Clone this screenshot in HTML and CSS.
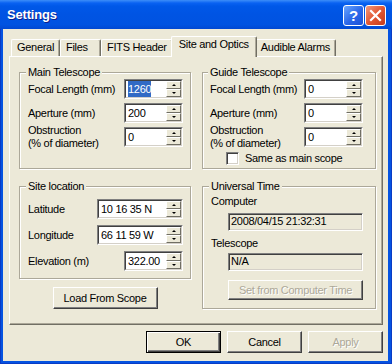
FILE: index.html
```html
<html>
<head>
<link rel="stylesheet" href="styles.css">
</head>
<body>
<div class="window">
  <div class="titlebar">
    <span class="title">Settings</span>
    <div class="caption-buttons">
      <span class="cap-btn help">?</span>
      <span class="cap-btn close">
        <svg width="13" height="13" viewBox="0 0 13 13"><path d="M2 2 L11 11 M11 2 L2 11" stroke="#fff" stroke-width="2.2" stroke-linecap="square"/></svg>
      </span>
    </div>
  </div>

  <div class="client">
    <div class="tabs">
      <span class="tab">General</span>
      <span class="tab">Files</span>
      <span class="tab">FITS Header</span>
      <span class="tab active">Site and Optics</span>
      <span class="tab">Audible Alarms</span>
    </div>

    <div class="panel">
      <fieldset class="group main-scope">
        <legend>Main Telescope</legend>
        <div class="field">
          <label>Focal Length (mm)</label>
          <div class="spin"><div class="spin-in"><span class="edit"><span class="sel">1260</span></span><span class="spin-btns"><i class="up"></i><i class="down"></i></span></div></div>
        </div>
        <div class="field">
          <label>Aperture (mm)</label>
          <div class="spin"><div class="spin-in"><span class="edit">200</span><span class="spin-btns"><i class="up"></i><i class="down"></i></span></div></div>
        </div>
        <div class="field">
          <label>Obstruction<br>(% of diameter)</label>
          <div class="spin"><div class="spin-in"><span class="edit">0</span><span class="spin-btns"><i class="up"></i><i class="down"></i></span></div></div>
        </div>
      </fieldset>

      <fieldset class="group guide-scope">
        <legend>Guide Telescope</legend>
        <div class="field">
          <label>Focal Length (mm)</label>
          <div class="spin"><div class="spin-in"><span class="edit">0</span><span class="spin-btns"><i class="up"></i><i class="down"></i></span></div></div>
        </div>
        <div class="field">
          <label>Aperture (mm)</label>
          <div class="spin"><div class="spin-in"><span class="edit">0</span><span class="spin-btns"><i class="up"></i><i class="down"></i></span></div></div>
        </div>
        <div class="field">
          <label>Obstruction<br>(% of diameter)</label>
          <div class="spin"><div class="spin-in"><span class="edit">0</span><span class="spin-btns"><i class="up"></i><i class="down"></i></span></div></div>
        </div>
        <div class="check"><span class="box"></span>Same as main scope</div>
      </fieldset>

      <div class="col">
        <fieldset class="group site">
          <legend>Site location</legend>
          <div class="field">
            <label>Latitude</label>
            <div class="spin wide"><div class="spin-in"><span class="edit">10 16 35 N</span><span class="spin-btns"><i class="up"></i><i class="down"></i></span></div></div>
          </div>
          <div class="field">
            <label>Longitude</label>
            <div class="spin wide"><div class="spin-in"><span class="edit">66 11 59 W</span><span class="spin-btns"><i class="up"></i><i class="down"></i></span></div></div>
          </div>
          <div class="field">
            <label>Elevation (m)</label>
            <div class="spin"><div class="spin-in"><span class="edit">322.00</span><span class="spin-btns"><i class="up"></i><i class="down"></i></span></div></div>
          </div>
        </fieldset>
        <button class="btn load">Load From Scope</button>
      </div>

      <div class="col">
        <fieldset class="group ut">
          <legend>Universal Time</legend>
          <div class="caption">Computer</div>
          <div class="readout">2008/04/15 21:32:31</div>
          <div class="caption second">Telescope</div>
          <div class="readout">N/A</div>
          <button class="btn wide-btn" disabled>Set from Computer Time</button>
        </fieldset>
      </div>
    </div>

    <div class="actions">
      <button class="btn default">OK</button>
      <button class="btn">Cancel</button>
      <button class="btn" disabled>Apply</button>
    </div>
  </div>
</div>
</body>
</html>
```

FILE: styles.css
```css
* {
  box-sizing: border-box;
}

body {
  margin: 0;
  font-family: "Liberation Sans", Arial, sans-serif;
  font-size: 11px;
  letter-spacing: -0.3px;
  color: #000;
  background-color: #fff;
}

.window {
  width: 392px;
  height: 364px;
  display: flex;
  flex-direction: column;
  background-color: #0553e1;
  box-shadow: inset 0 0 0 1px #0a3bc4;
}

/* title bar */
.titlebar {
  flex: none;
  height: 29px;
  display: flex;
  align-items: center;
  justify-content: space-between;
  padding: 0 6px 0 7px;
  background: linear-gradient(#3d8ef8 0, #0a62f2 3px, #0058e8 6px, #0054e3 50%, #0053e1 85%, #0148d2 100%);
}

.title {
  color: #fff;
  font: bold 13px "Liberation Sans", Arial, sans-serif;
  letter-spacing: -0.2px;
  text-shadow: 1px 1px #0f1f8a;
}

.caption-buttons {
  display: flex;
  gap: 1px;
  margin-top: 2px;
}

.cap-btn {
  width: 21px;
  height: 21px;
  border: 1px solid #fff;
  border-radius: 3px;
  display: flex;
  align-items: center;
  justify-content: center;
  color: #fff;
}

.help {
  background: linear-gradient(135deg, #6aa6ff, #2a66e8 55%, #1c51d8);
  font: bold 15px "Liberation Sans", Arial, sans-serif;
}

.close {
  background: linear-gradient(135deg, #f29a7c, #e25733 50%, #c53b1b);
}

/* dialog client area */
.client {
  flex: 1;
  margin: 0 4px 3px 3px;
  padding: 7px 5px 0 6px;
  background-color: #ece9d8;
  display: flex;
  flex-direction: column;
}

.tabs {
  flex: none;
  height: 20px;
  display: flex;
  align-items: flex-end;
  padding-left: 2px;
}

.tab {
  height: 17px;
  min-width: 41px;
  padding: 0 5px;
  line-height: 15px;
  border: 1px solid #fff;
  border-right-color: #716f64;
  border-bottom: none;
  border-radius: 2px 2px 0 0;
  box-shadow: inset -1px 0 #aca899;
}

.tab.active {
  position: relative;
  z-index: 1;
  height: 21px;
  margin: 0 -2px -1px;
  padding: 0 7px;
  background-color: #ece9d8;
}

.panel {
  flex: 1;
  display: grid;
  grid-template-columns: 172px 174px;
  align-content: start;
  column-gap: 11px;
  padding: 9px 0 0 9px;
  border: 1px solid;
  border-color: #fff #716f64 #716f64 #fff;
  box-shadow: inset -1px -1px #aca899;
}

/* group boxes */
.group {
  margin: 0;
  min-width: 0;
  padding: 0 7px 7px 8px;
  border: 1px solid #aca899;
  box-shadow: 1px 1px 0 #fff, inset 1px 1px 0 #fff;
}

.group legend {
  padding: 0 2px;
  margin-left: -2px;
  line-height: 13px;
  background-color: #ece9d8;
}

.guide-scope {
  padding: 0 12px 3px 7px;
}

.field {
  display: flex;
  align-items: center;
  justify-content: space-between;
  height: 20px;
  margin-bottom: 4px;
}

.field label {
  line-height: 13px;
  white-space: nowrap;
}

.spin {
  flex: none;
  width: 59px;
  height: 20px;
  border: 1px solid;
  border-color: #808080 #fff #fff #808080;
}

.spin.wide {
  width: 86px;
}

.spin-in {
  height: 100%;
  display: flex;
  border: 1px solid;
  border-color: #404040 #d4d0c8 #d4d0c8 #404040;
  background-color: #fff;
}

.edit {
  flex: 1;
  padding-left: 2px;
  line-height: 16px;
  white-space: nowrap;
  overflow: hidden;
}

.sel {
  display: inline-block;
  background-color: #316ac5;
  color: #fff;
}

.spin-btns {
  width: 15px;
  display: flex;
  flex-direction: column;
}

.spin-btns i {
  flex: 1;
  display: flex;
  align-items: center;
  justify-content: center;
  background-color: #ece9d8;
  border: 1px solid;
  border-color: #fff #716f64 #716f64 #fff;
}

.spin-btns i::after {
  content: "";
  border-left: 2px solid transparent;
  border-right: 2px solid transparent;
}

.spin-btns .up::after {
  border-bottom: 2px solid #000;
}

.spin-btns .down::after {
  border-top: 2px solid #000;
}

.check {
  display: flex;
  align-items: center;
  gap: 6px;
  margin: 5px 0 0 16px;
  line-height: 13px;
}

.check .box {
  width: 13px;
  height: 13px;
  background-color: #fff;
  border: 1px solid;
  border-color: #808080 #fff #fff #808080;
  box-shadow: inset 1px 1px #404040, inset -1px -1px #d4d0c8;
}

/* lower row */
.col {
  margin-top: 11px;
  display: flex;
  flex-direction: column;
  align-items: center;
}

.col .group {
  width: 100%;
}

.site .field {
  margin: 6px 0 0;
}

.ut {
  padding: 0 12px 8px 8px;
}

.caption {
  margin-top: 2px;
  line-height: 13px;
}

.caption.second {
  margin-top: 6px;
}

.readout {
  height: 18px;
  margin: 5px 0 0 17px;
  padding-left: 2px;
  line-height: 14px;
  border: 1px solid;
  border-color: #808080 #fff #fff #808080;
  box-shadow: inset 1px 1px #404040, inset -1px -1px #d4d0c8;
  white-space: nowrap;
}

.caption.second + .readout {
  margin-top: 3px;
}

/* buttons */
.btn {
  height: 22px;
  padding: 0;
  font-family: "Liberation Sans", Arial, sans-serif;
  font-size: 11px;
  letter-spacing: -0.3px;
  color: #000;
  background-color: #ece9d8;
  border: 1px solid;
  border-color: #fff #404040 #404040 #fff;
  box-shadow: inset -1px -1px #808080;
}

.btn:disabled {
  color: #aca899;
  text-shadow: 1px 1px #fff;
}

.btn.default {
  border-color: #000;
  box-shadow: inset 1px 1px #fff, inset -1px -1px #404040, inset -2px -2px #808080;
}

.load {
  width: 105px;
  margin-top: 8px;
}

.wide-btn {
  display: block;
  width: calc(100% - 17px);
  height: 20px;
  margin: 9px 0 0 17px;
}

.actions {
  flex: none;
  display: flex;
  justify-content: flex-end;
  gap: 6px;
  margin: 6px 0 8px;
}

.actions .btn {
  width: 75px;
}
```
